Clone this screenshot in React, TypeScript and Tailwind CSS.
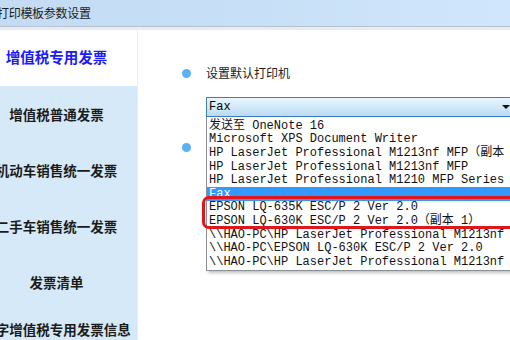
import React from 'react';

const menuItems = [
  '增值税普通发票',
  '机动车销售统一发票',
  '二手车销售统一发票',
  '发票清单',
  '红字增值税专用发票信息表',
];

const printers = [
  '发送至 OneNote 16',
  'Microsoft XPS Document Writer',
  'HP LaserJet Professional M1213nf MFP（副本 1）',
  'HP LaserJet Professional M1213nf MFP',
  'HP LaserJet Professional M1210 MFP Series',
  'Fax',
  'EPSON LQ-635K ESC/P 2 Ver 2.0',
  'EPSON LQ-630K ESC/P 2 Ver 2.0（副本 1）',
  '\\\\HAO-PC\\HP LaserJet Professional M1213nf MFP',
  '\\\\HAO-PC\\EPSON LQ-630K ESC/P 2 Ver 2.0',
  '\\\\HAO-PC\\HP LaserJet Professional M1213nf',
];

export default function App() {
  return (
    <div className="relative w-[510px] h-[340px] overflow-hidden bg-white font-['Noto_Sans_CJK_SC',sans-serif]">
      {/* title bar */}
      <div className="h-[27px] flex items-center bg-gradient-to-r from-[#c3dbf3] via-[#c8e0f7] to-[#d0e6fc] border-b border-[#b4c2d4]">
        <span className="-ml-[3px] text-[12px] text-[#1c1c1c] tracking-[-0.3px]">打印模板参数设置</span>
      </div>
      <div className="h-[3px] bg-[#ebebef]" />

      <div className="flex h-[310px]">
        {/* left menu */}
        <div className="-ml-[24px] w-[162px] shrink-0 flex flex-col border-r border-[#e4eef8] bg-[#d6e9f8]">
          <div className="h-[56px] shrink-0 bg-white flex items-center justify-center pb-[3px]">
            <span className="text-[14.5px] font-bold text-[#1a1aff]">增值税专用发票</span>
          </div>
          {menuItems.map(t => (
            <div key={t} className="h-[56px] shrink-0 flex items-center justify-center px-[4px]">
              <span className="text-[13.5px] leading-[18px] font-bold text-[#1b1b1b] text-center">{t}</span>
            </div>
          ))}
        </div>

        {/* right content */}
        <div className="relative flex-1">
          <div className="mt-[37px] h-[12px] flex items-center pl-[44px]">
            <span className="w-[9px] h-[9px] rounded-full bg-[#5ab1f6]" />
            <span className="ml-[15px] text-[12px] leading-[12px] text-[#222]">设置默认打印机</span>
          </div>

          <div className="relative mt-[18px] ml-[68px] h-[20px] w-[320px] border border-[#3c7fb1] bg-gradient-to-b from-[#eaf6fd] via-[#d2eafa] to-[#bad9f3] flex items-center">
            <span className="pl-[2px] text-[12px] text-black font-['Liberation_Mono',monospace]">Fax</span>
            <span className="absolute left-[295px] top-[7px] w-0 h-0 border-l-[4px] border-r-[4px] border-t-[4px] border-l-transparent border-r-transparent border-t-[#111]" />
          </div>

          <div className="mt-[25px] h-[10px] flex items-center pl-[44px]">
            <span className="w-[9px] h-[9px] rounded-full bg-[#5ab1f6]" />
          </div>

          {/* dropdown list */}
          <div className="absolute left-[68px] top-[87px] w-[340px] bg-white border-l border-b border-[#8b9096] pt-[2px] pb-[1px] shadow-[2px_2px_3px_rgba(0,0,0,0.25)]">
            {printers.map(p => (
              <div
                key={p}
                className={`h-[13.6px] flex items-center pl-[2px] whitespace-nowrap text-[12px] text-[#111] font-['Liberation_Mono','Noto_Sans_CJK_SC',monospace] ${p === 'Fax' ? 'bg-[#3399ff] !text-white' : ''}`}
              >
                {p}
              </div>
            ))}
          </div>

          {/* red annotation */}
          <div className="absolute left-[64px] top-[166px] w-[340px] h-[33px] rounded-[7px] border-[3px] border-[#e0161b]" />
        </div>
      </div>
    </div>
  );
}
